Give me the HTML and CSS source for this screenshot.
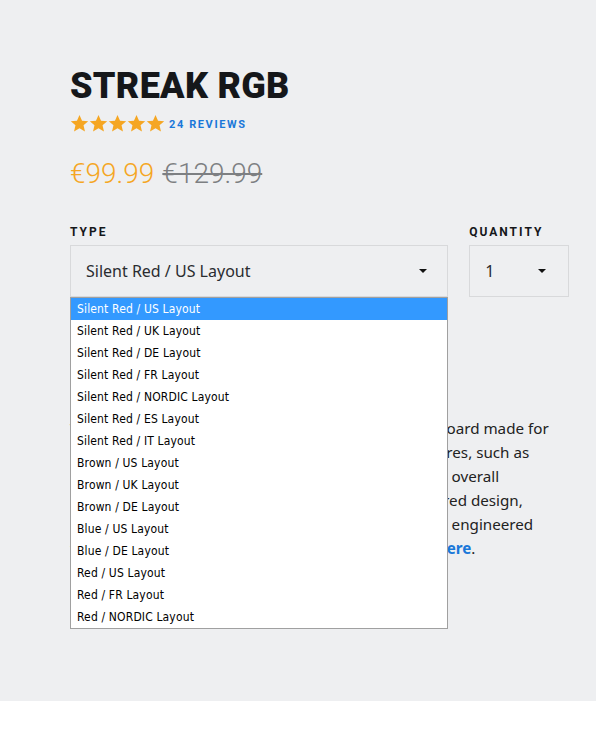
FILE: index.html
```html
<!DOCTYPE html>
<html lang="en">
<head>
<meta charset="utf-8">
<title>Streak RGB</title>
<link rel="stylesheet" href="styles.css">
</head>
<body>
<main class="page">
  <section class="product">
    <h1 class="title">STREAK RGB</h1>
    <div class="rating">
      <span class="stars">
        <svg class="star" viewBox="0 0 24 24"><path d="M12 1.2l3.2 7.2 7.8.7-5.9 5.2 1.8 7.7L12 18l-6.9 4 1.8-7.7L1 9.1l7.8-.7z"/></svg>
        <svg class="star" viewBox="0 0 24 24"><path d="M12 1.2l3.2 7.2 7.8.7-5.9 5.2 1.8 7.7L12 18l-6.9 4 1.8-7.7L1 9.1l7.8-.7z"/></svg>
        <svg class="star" viewBox="0 0 24 24"><path d="M12 1.2l3.2 7.2 7.8.7-5.9 5.2 1.8 7.7L12 18l-6.9 4 1.8-7.7L1 9.1l7.8-.7z"/></svg>
        <svg class="star" viewBox="0 0 24 24"><path d="M12 1.2l3.2 7.2 7.8.7-5.9 5.2 1.8 7.7L12 18l-6.9 4 1.8-7.7L1 9.1l7.8-.7z"/></svg>
        <svg class="star" viewBox="0 0 24 24"><path d="M12 1.2l3.2 7.2 7.8.7-5.9 5.2 1.8 7.7L12 18l-6.9 4 1.8-7.7L1 9.1l7.8-.7z"/></svg>
      </span>
      <a class="reviews" href="#">24 REVIEWS</a>
    </div>
    <div class="price">
      <span class="price-now">€99.99</span>
      <span class="price-old">€129.99</span>
    </div>

    <div class="options">
      <div class="field field-type">
        <div class="label">TYPE</div>
        <div class="select">
          <span class="select-value">Silent Red / US Layout</span>
          <span class="caret"></span>
        </div>
        <ul class="dropdown">
          <li class="opt selected">Silent Red / US Layout</li>
          <li class="opt">Silent Red / UK Layout</li>
          <li class="opt">Silent Red / DE Layout</li>
          <li class="opt">Silent Red / FR Layout</li>
          <li class="opt">Silent Red / NORDIC Layout</li>
          <li class="opt">Silent Red / ES Layout</li>
          <li class="opt">Silent Red / IT Layout</li>
          <li class="opt">Brown / US Layout</li>
          <li class="opt">Brown / UK Layout</li>
          <li class="opt">Brown / DE Layout</li>
          <li class="opt">Blue / US Layout</li>
          <li class="opt">Blue / DE Layout</li>
          <li class="opt">Red / US Layout</li>
          <li class="opt">Red / FR Layout</li>
          <li class="opt">Red / NORDIC Layout</li>
        </ul>
      </div>
      <div class="field field-qty">
        <div class="label">QUANTITY</div>
        <div class="select">
          <span class="select-value">1</span>
          <span class="caret"></span>
        </div>
      </div>
    </div>

    <p class="description">The Streak RGB is a full-size mechanical gaming keyboard made for<br>
    gamers and typists who want a set of premium features, such as<br>
    per-key RGB back-lighting, handy media keys, and an overall<br>
    sleek look with a minimal, clean and smartly considered design,<br>
    all on top of a rigid and brushed aluminium top plate engineered<br>
    to last for many years. Read more about the switch <a href="#">here</a>.</p>
  </section>
</main>
</body>
</html>
```

FILE: styles.css
```css
* { box-sizing: border-box; }

html, body {
  margin: 0;
  padding: 0;
  background: #ffffff;
}

.page {
  background: #eeeff1;
  height: 701px;
  padding: 67px 27px 0 70px;
  font-family: "Noto Sans", "Open Sans", sans-serif;
  color: #222;
  overflow: hidden;
}

.product {
  width: 499px;
}

.title {
  margin: 0;
  font-family: Roboto, "Liberation Sans", sans-serif;
  font-weight: 900;
  font-size: 36px;
  line-height: 38px;
  letter-spacing: 0.3px;
  color: #15171a;
}

.rating {
  display: flex;
  align-items: center;
  gap: 4px;
  margin-top: 9px;
  height: 18px;
}

.stars {
  display: flex;
  gap: 0;
}

.star {
  width: 19px;
  height: 19px;
  fill: #f5a623;
}

.reviews {
  font-family: Roboto, "Liberation Sans", sans-serif;
  font-weight: 700;
  font-size: 11px;
  letter-spacing: 1.6px;
  color: #1a78d9;
  text-decoration: none;
  padding-top: 2px;
}

.price {
  margin-top: 26px;
  display: flex;
  gap: 8px;
  font-family: Roboto, "Liberation Sans", sans-serif;
  font-weight: 300;
  font-size: 28px;
  line-height: 32px;
}

.price-now { color: #f5a623; }

.price-old {
  color: #7d7f82;
  text-decoration: line-through;
}

.options {
  display: flex;
  gap: 21px;
  margin-top: 35px;
}

.field { position: relative; }
.field-type { width: 379px; }
.field-qty { width: 100px; }

.label {
  font-family: Roboto, "Liberation Sans", sans-serif;
  font-weight: 700;
  font-size: 12px;
  letter-spacing: 2px;
  line-height: 14px;
  color: #15171a;
  margin-bottom: 6px;
}

.select {
  height: 52px;
  border: 1px solid #d8d9db;
  display: flex;
  align-items: center;
  justify-content: space-between;
  padding: 0 20px 0 15px;
  font-size: 16px;
  color: #2a2c30;
}

.field-qty .select { padding: 0 22px 0 15px; }

.caret {
  width: 0;
  height: 0;
  border-left: 4px solid transparent;
  border-right: 4px solid transparent;
  border-top: 4px solid #111;
}

.dropdown {
  position: absolute;
  left: 0;
  top: 72px;
  width: 378px;
  margin: 0;
  padding: 0;
  list-style: none;
  background: #fff;
  border: 1px solid #a0a0a0;
  z-index: 10;
  font-family: "DejaVu Sans", Verdana, sans-serif;
  font-stretch: condensed;
  font-size: 12px;
  letter-spacing: 0.15px;
  color: #000;
}

.opt {
  height: 22px;
  line-height: 22px;
  padding-left: 6px;
  white-space: nowrap;
}

.opt.selected {
  background: #3399ff;
  color: #fff;
}

.description {
  margin: 119px 0 0;
  font-size: 15.2px;
  line-height: 24px;
  white-space: nowrap;
  color: #222;
}

.description a {
  color: #1a78d9;
  font-weight: 700;
  text-decoration: none;
}
```
